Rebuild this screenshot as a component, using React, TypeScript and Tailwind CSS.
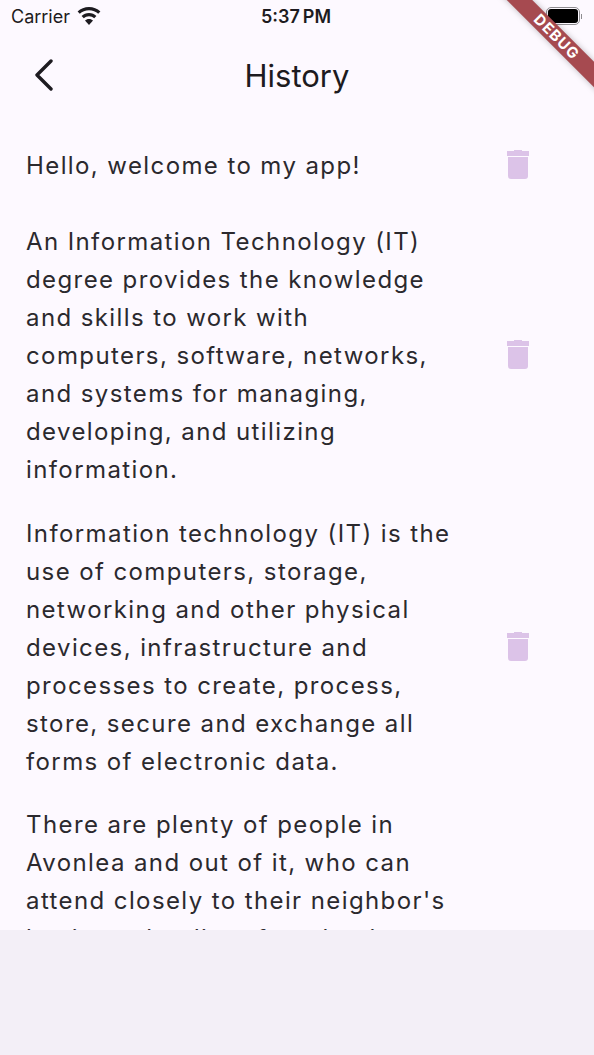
const items = [
  "Hello, welcome to my app!",
  "An Information Technology (IT) degree provides the knowledge and skills to work with computers, software, networks, and systems for managing, developing, and utilizing information.",
  "Information technology (IT) is the use of computers, storage, networking and other physical devices, infrastructure and processes to create, process, store, secure and exchange all forms of electronic data.",
  "There are plenty of people in Avonlea and out of it, who can attend closely to their neighbor's business by dint of neglecting their own",
];

function TrashIcon() {
  return (
    <svg width="24" height="30" viewBox="0 0 24 30" fill="#dcc3e8">
      <path d="M8 0h8v1h7v5H1V1h7z" />
      <path d="M2 7h20v19a3 3 0 0 1-3 3H5a3 3 0 0 1-3-3z" />
    </svg>
  );
}

function WifiIcon() {
  return (
    <svg width="24" height="18" viewBox="0 0 24 18" fill="#1d1b20">
      <path d="M12 0C7.6 0 3.6 1.7.6 4.500l2.200 2.300C5.200 4.500 8.400 3.200 12 3.200s6.800 1.300 9.200 3.600l2.200-2.300C20.400 1.700 16.400 0 12 0z" />
      <path d="M12 6c-2.900 0-5.500 1.100-7.400 2.900l2.200 2.300c1.400-1.300 3.200-2 5.200-2s3.800.7 5.200 2l2.200-2.300C17.500 7.100 14.900 6 12 6z" />
      <path d="M12 12c-1.600 0-3 .6-4 1.600l4 4.400 4-4.400c-1-1-2.400-1.600-4-1.600z" />
    </svg>
  );
}

export default function App() {
  return (
    <div className="relative h-[1055px] w-[594px] overflow-hidden bg-[#f3eff7] font-['Inter',sans-serif] text-[#1d1b20]">
      <div className="h-[930px] overflow-hidden bg-[#fdf9ff]">
        {/* STATUS BAR */}
        <div className="flex h-[32px] items-center justify-between pl-[11px] pr-[12px]">
          <div className="flex items-center gap-[7px] text-[18px]">
            <span>Carrier</span>
            <WifiIcon />
          </div>
          <span className="absolute left-[261px] text-[18px] font-semibold">5:37&#8201;PM</span>
          <div className="flex items-center gap-[1px]">
            <div className="rounded-[5px] border border-[#8e8c90] p-[1px]">
              <div className="h-[14px] w-[30px] rounded-[3px] bg-black" />
            </div>
            <div className="h-[5px] w-[1px] bg-[#8e8c90]" />
          </div>
        </div>

        {/* HEADER */}
        <div className="relative flex h-[88px] items-center justify-center">
          <svg className="absolute left-[33px] top-[27px]" width="22" height="32" viewBox="0 0 22 32" fill="none" stroke="#1d1b20" strokeWidth="3.4" strokeLinecap="round" strokeLinejoin="round">
            <path d="M18 2 4 16l14 14" />
          </svg>
          <h1 className="text-[31px] leading-[40px]">History</h1>
        </div>

        {/* LIST */}
        <div className="mt-[14px] flex flex-col gap-[26px]">
          {items.map((item) => {
            const last = item.startsWith("There");
            return (
              <div key={item} className="flex min-h-[62px] items-center pl-[26px] pr-[64px]">
                <p className={`w-[432px] text-[24px] leading-[38px] tracking-[1.4px] text-[#2b292e] ${last ? "" : "-mb-[1px] pt-[1px]"}`}>
                  {item}
                </p>
                <div className="ml-auto flex w-[24px] justify-center">
                  {last ? null : <TrashIcon />}
                </div>
              </div>
            );
          })}
        </div>
      </div>

      {/* DEBUG BANNER */}
      <div className="absolute right-[-43px] top-[28px] flex h-[18px] w-[161px] rotate-45 items-center justify-center bg-[#a64a50] text-[15px] font-bold tracking-[1px] text-white shadow-[0_0_6px_rgba(0,0,0,0.25)]">
        DEBUG
      </div>
    </div>
  );
}
